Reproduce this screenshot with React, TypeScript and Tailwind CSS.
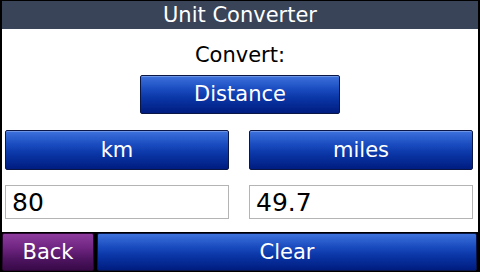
import React from "react";

const blueBtn =
  "border border-[#0a1646] rounded-[2px] bg-[linear-gradient(to_bottom,#3e72dc_0%,#1a4cc0_35%,#0a36a6_60%,#001c80_100%)] text-white flex items-center justify-center text-[21px] leading-none shadow-[inset_0_1px_0_rgba(255,255,255,0.25)]";

export default function App() {
  return (
    <div className="w-[480px] h-[272px] bg-black flex flex-col px-[2px] pt-[1px] font-['DejaVu_Sans',sans-serif] overflow-hidden">
      <div className="h-[28px] bg-[#3a4458] flex items-center justify-center text-white text-[21px] leading-none">
        Unit Converter
      </div>
      <div className="h-[203px] bg-white flex flex-col">
        <div className="mt-[14px] h-[24px] flex items-center justify-center text-black text-[21px] leading-none">
          Convert:
        </div>
        <div className="mt-[8px] flex justify-center">
          <div className={`${blueBtn} w-[200px] h-[39px]`}>Distance</div>
        </div>
        <div className="mt-[16px] grid grid-cols-2 gap-[20px] pl-[3px] pr-[5px]">
          <div className={`${blueBtn} h-[40px]`}>km</div>
          <div className={`${blueBtn} h-[40px]`}>miles</div>
        </div>
        <div className="mt-[15px] grid grid-cols-2 gap-[20px] pl-[3px] pr-[5px]">
          <div className="h-[34px] border border-[#b4b4b4] bg-white flex items-center pl-[6px] text-black text-[25px] leading-none">
            80
          </div>
          <div className="h-[34px] border border-[#b4b4b4] bg-white flex items-center pl-[6px] text-black text-[25px] leading-none">
            49.7
          </div>
        </div>
      </div>
      <div className="h-[40px] flex gap-[3px] py-[1px]">
        <div className="w-[92px] border border-[#2a0632] rounded-[2px] bg-[linear-gradient(to_bottom,#8e3c9e_0%,#6e2480_40%,#4e1460_70%,#380a48_100%)] text-white flex items-center justify-center text-[21px] leading-none">
          Back
        </div>
        <div className="flex-1 mr-[1px] border border-[#0a1646] rounded-[2px] bg-[linear-gradient(to_bottom,#3e72dc_0%,#1a4cc0_35%,#0a36a6_60%,#001c80_100%)] text-white flex items-center justify-center text-[21px] leading-none">
          Clear
        </div>
      </div>
    </div>
  );
}
